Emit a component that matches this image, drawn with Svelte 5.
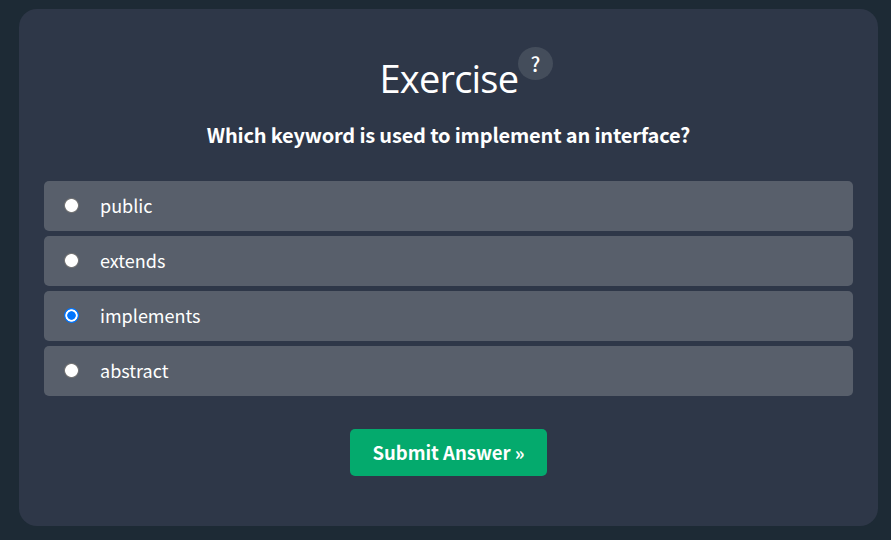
<script>
  const options = ['public', 'extends', 'implements', 'abstract'];
  let selected = $state('implements');
</script>

<main>
  <section class="card">
    <header>
      <h2>Exercise</h2>
      <button class="help" type="button" aria-label="Help">?</button>
    </header>
    <p class="question"><span>Which keyword is used to implement an interface?</span></p>
    <form onsubmit={(event) => event.preventDefault()}>
      <div class="options">
        {#each options as option}
          <label>
            <input type="radio" name="answer" value={option} bind:group={selected} />
            <span>{option}</span>
          </label>
        {/each}
      </div>
      <button class="submit" type="submit">Submit Answer »</button>
    </form>
  </section>
</main>

<style>
  :global(body) {
    margin: 0;
    background: #1d2a35;
  }

  main {
    box-sizing: border-box;
    height: 540px;
    padding: 9px 13px 14px 19px;
    background: #1d2a35;
    color: #fff;
    font-family: "Noto Sans CJK SC", "Noto Sans", sans-serif;
  }

  .card {
    box-sizing: border-box;
    height: 517px;
    padding: 38px 25px 0;
    border-radius: 18px;
    background: #2e3748;
  }

  header {
    display: flex;
    justify-content: center;
    height: 64px;
    padding-left: 35px;
  }

  h2 {
    width: 138px;
    margin: 4px 0 0;
    font: 400 38px/54px "Open Sans", "Noto Sans", sans-serif;
    letter-spacing: -0.8px;
    white-space: nowrap;
  }

  .help {
    width: 35px;
    height: 33px;
    padding: 0 0 0 1px;
    border: 0;
    border-radius: 50%;
    background: #444d5b;
    color: #fff;
    font: 500 20px/33px "Noto Sans CJK SC", sans-serif;
  }

  .question {
    margin: 7px 0 0;
    height: 34px;
    font-size: 20px;
    font-weight: 700;
    line-height: 34px;
    letter-spacing: -0.18px;
    text-align: center;
    white-space: nowrap;
  }

  .options {
    display: flex;
    flex-direction: column;
    gap: 5px;
    margin-top: 29px;
  }

  label {
    display: flex;
    align-items: center;
    height: 50px;
    border-radius: 5px;
    background: #585f6b;
    font-size: 18px;
    line-height: 48px;
  }

  label span {
    height: 50px;
  }

  input {
    appearance: none;
    width: 15px;
    height: 15px;
    margin: 0 21px 2px 20px;
    border-radius: 50%;
    background: radial-gradient(circle, #fff 6px, #767676 6.8px);
  }

  input:checked {
    background: radial-gradient(circle, #0075ff 3.9px, #fff 4.6px, #fff 5.8px, #0075ff 6.5px);
  }

  .submit {
    display: block;
    width: 197px;
    height: 47px;
    margin: 33px auto 0;
    padding: 0;
    border: 0;
    border-radius: 5px;
    background: #04aa6d;
    color: #fff;
    font: 700 18.5px/47px "Noto Sans CJK SC", sans-serif;
    white-space: nowrap;
  }
</style>
